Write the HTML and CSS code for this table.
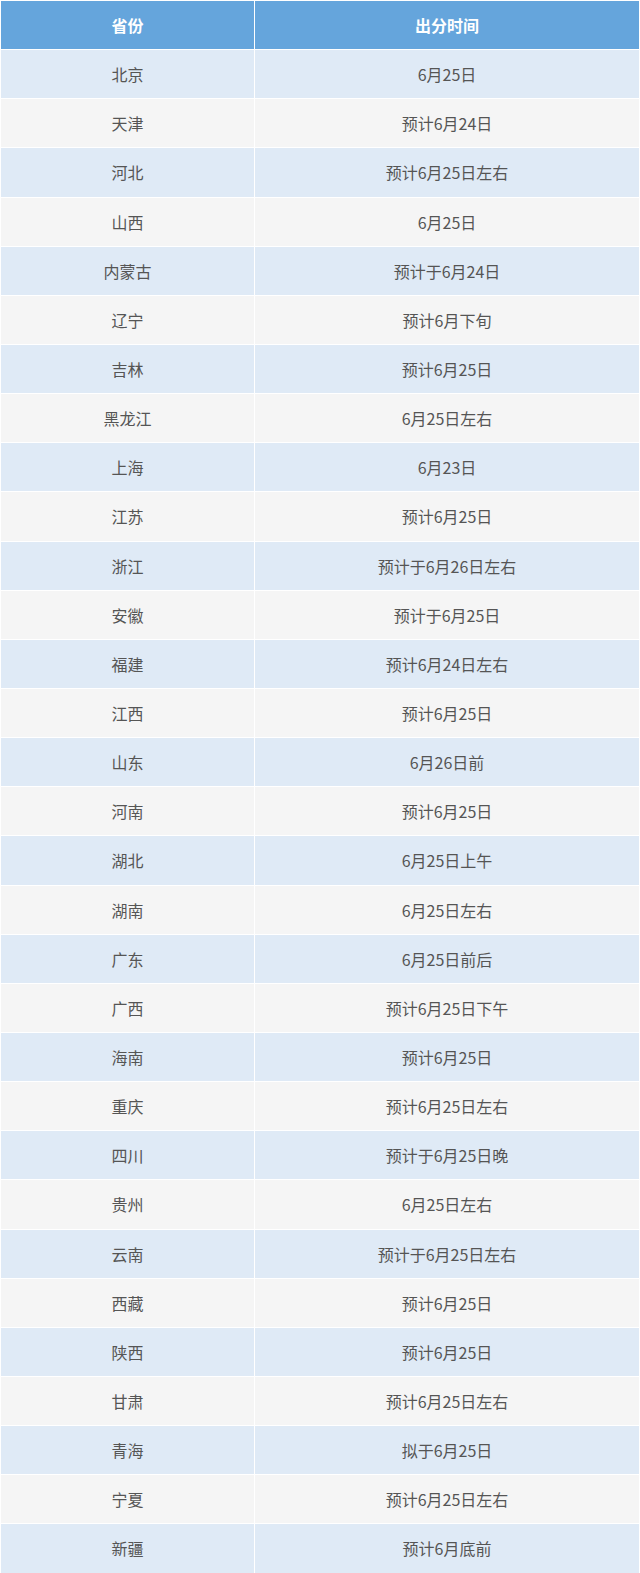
FILE: index.html
```html
<!DOCTYPE html>
<html lang="zh">
<head>
<meta charset="utf-8">
<link rel="stylesheet" href="styles.css">
</head>
<body>
<table class="score-table">
<thead>
<tr><th class="col-prov">省份</th><th>出分时间</th></tr>
</thead>
<tbody>
<tr><td>北京</td><td>6月25日</td></tr>
<tr><td>天津</td><td>预计6月24日</td></tr>
<tr><td>河北</td><td>预计6月25日左右</td></tr>
<tr><td>山西</td><td>6月25日</td></tr>
<tr><td>内蒙古</td><td>预计于6月24日</td></tr>
<tr><td>辽宁</td><td>预计6月下旬</td></tr>
<tr><td>吉林</td><td>预计6月25日</td></tr>
<tr><td>黑龙江</td><td>6月25日左右</td></tr>
<tr><td>上海</td><td>6月23日</td></tr>
<tr><td>江苏</td><td>预计6月25日</td></tr>
<tr><td>浙江</td><td>预计于6月26日左右</td></tr>
<tr><td>安徽</td><td>预计于6月25日</td></tr>
<tr><td>福建</td><td>预计6月24日左右</td></tr>
<tr><td>江西</td><td>预计6月25日</td></tr>
<tr><td>山东</td><td>6月26日前</td></tr>
<tr><td>河南</td><td>预计6月25日</td></tr>
<tr><td>湖北</td><td>6月25日上午</td></tr>
<tr><td>湖南</td><td>6月25日左右</td></tr>
<tr><td>广东</td><td>6月25日前后</td></tr>
<tr><td>广西</td><td>预计6月25日下午</td></tr>
<tr><td>海南</td><td>预计6月25日</td></tr>
<tr><td>重庆</td><td>预计6月25日左右</td></tr>
<tr><td>四川</td><td>预计于6月25日晚</td></tr>
<tr><td>贵州</td><td>6月25日左右</td></tr>
<tr><td>云南</td><td>预计于6月25日左右</td></tr>
<tr><td>西藏</td><td>预计6月25日</td></tr>
<tr><td>陕西</td><td>预计6月25日</td></tr>
<tr><td>甘肃</td><td>预计6月25日左右</td></tr>
<tr><td>青海</td><td>拟于6月25日</td></tr>
<tr><td>宁夏</td><td>预计6月25日左右</td></tr>
<tr><td>新疆</td><td>预计6月底前</td></tr>
</tbody>
</table>
</body>
</html>
```
FILE: styles.css
```css
html, body {
  margin: 0;
  padding: 0;
  background: #ffffff;
}
.score-table {
  width: 640px;
  border-collapse: collapse;
  table-layout: fixed;
  font-family: "Noto Sans CJK SC", "Noto Sans", sans-serif;
  font-size: 16px;
  color: #555555;
}
.score-table tr {
  height: 49.15px;
}
.score-table th,
.score-table td {
  border: 1px solid #ffffff;
  text-align: center;
  vertical-align: middle;
  padding: 0;
  line-height: 20px;
}
.score-table th {
  background: #65a5dc;
  color: #ffffff;
  font-weight: bold;
}
.col-prov {
  width: 253px;
}
.score-table tbody tr:nth-child(odd) td {
  background: #dfeaf6;
}
.score-table tbody tr:nth-child(even) td {
  background: #f5f5f5;
}
```
